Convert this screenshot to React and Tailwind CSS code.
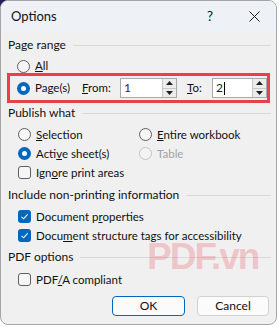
import React from "react";

const font = { fontFamily: 'Lato, "Noto Sans", sans-serif' };

function Radio({ checked, disabled }) {
  if (checked) {
    return (
      <span className="w-[13px] h-[13px] rounded-full bg-[#0067c0] flex items-center justify-center shrink-0">
        <span className="w-[5px] h-[5px] rounded-full bg-white" />
      </span>
    );
  }
  return (
    <span
      className={
        "w-[13px] h-[13px] rounded-full border shrink-0 " +
        (disabled ? "border-[#c4c4c4] bg-[#f3f3f3]" : "border-[#5f5f5f] bg-[#f6f6f6]")
      }
    />
  );
}

function Check({ checked }) {
  if (checked) {
    return (
      <span className="w-[13px] h-[13px] rounded-[3px] bg-[#0067c0] flex items-center justify-center shrink-0">
        <svg width="9" height="9" viewBox="0 0 9 9">
          <path d="M1.5 4.8 L3.6 6.8 L7.6 2.4" fill="none" stroke="white" strokeWidth="1.1" />
        </svg>
      </span>
    );
  }
  return <span className="w-[13px] h-[13px] rounded-[3px] border border-[#5f5f5f] bg-[#f6f6f6] shrink-0" />;
}

function Header({ children, className = "" }) {
  return (
    <div className={"h-[16px] flex items-center " + className}>
      <span className="text-[12px] text-[#111] leading-none whitespace-nowrap">{children}</span>
      <span className="flex-1 h-px bg-[#d9d9d9] ml-[7px] mr-[-2px]" />
    </div>
  );
}

function Spin() {
  return (
    <div className="w-[14px] h-full flex flex-col border-l border-[#c8c8c8]">
      <div className="flex-1 bg-[#ececec] flex items-center justify-center border-b border-[#c8c8c8]">
        <svg width="7" height="4" viewBox="0 0 7 4"><path d="M0 4 L3.5 0 L7 4 Z" fill="#202020" /></svg>
      </div>
      <div className="flex-1 bg-[#ececec] flex items-center justify-center">
        <svg width="7" height="4" viewBox="0 0 7 4"><path d="M0 0 L3.5 4 L7 0 Z" fill="#202020" /></svg>
      </div>
    </div>
  );
}

function Row({ children, className = "" }) {
  return <div className={"h-[19px] flex items-center " + className}>{children}</div>;
}

function Label({ children, className = "" }) {
  return <span className={"text-[11.5px] leading-none whitespace-nowrap text-[#111] " + className}>{children}</span>;
}

export default function App() {
  return (
    <div
      className="w-[280px] h-[327px] bg-[linear-gradient(135deg,#221f5e_5px,#ffffff_5px)] relative overflow-hidden"
      style={font}
    >
      <div className="w-[277px] h-[325px] rounded-[8px] border border-[#a6a6a6] overflow-hidden flex flex-col bg-[#f0f0f0]">
        <div className="h-[31px] bg-[#eef2f7] flex items-center pl-[10px] shrink-0">
          <span className="text-[13px] text-[#111] leading-none">Options</span>
          <span className="ml-auto text-[13.5px] text-[#111] leading-none mr-[36px]">?</span>
          <svg width="11" height="11" viewBox="0 0 11 11" className="mr-[16px]">
            <path d="M0.5 0.5 L10.5 10.5 M10.5 0.5 L0.5 10.5" stroke="#1b1b1b" strokeWidth="1" />
          </svg>
        </div>

        <div className="flex-1 flex flex-col px-[7px] pt-[5px]">
          <Header>Page range</Header>
          <div className="h-[14px] mt-[6px] flex items-center pl-[9px] gap-[5px]">
            <Radio />
            <Label><u>A</u>ll</Label>
          </div>
          <div className="h-[30px] border-[3px] border-[#ec3f4a] flex items-center pl-[7px] mr-[-1px] ml-[-1px]">
            <Radio checked />
            <Label className="ml-[5px] w-[47px]">Pa<u>g</u>e(s)</Label>
            <Label className="w-[38px]"><u>F</u>rom:</Label>
            <div className="w-[57px] h-[20px] bg-white border border-[#a8a8a8] flex">
              <span className="flex-1 text-[12px] leading-[18px] pl-[3px] text-[#2a1e6e]">1</span>
              <Spin />
            </div>
            <Label className="ml-[10px] w-[25px]"><u>T</u>o:</Label>
            <div className="w-[55px] h-[20px] bg-white border border-[#a8a8a8] flex">
              <span className="flex-1 text-[12px] leading-[18px] pl-[3px] text-[#1b1b3b] flex items-center">
                2<span className="w-px h-[13px] bg-black ml-[1px]" />
              </span>
              <Spin />
            </div>
          </div>

          <Header className="mt-[2px]">Publish what</Header>
          <div className="grid grid-cols-[121px_1fr] mt-[4px] pl-[10px]">
            <Row className="gap-[5px]"><Radio /><Label><u>S</u>election</Label></Row>
            <Row className="gap-[5px]"><Radio /><Label><u>E</u>ntire workbook</Label></Row>
            <Row className="gap-[5px]"><Radio checked /><Label>Acti<u>v</u>e sheet(s)</Label></Row>
            <Row className="gap-[5px]"><Radio disabled /><Label className="text-[#a3a3a3]">Table</Label></Row>
            <Row className="gap-[5px] col-span-2"><Check /><Label>Ign<u>o</u>re print areas</Label></Row>
          </div>

          <Header className="mt-[5px]">Include non-printing information</Header>
          <div className="flex flex-col mt-[4px] pl-[10px]">
            <Row className="gap-[5px]"><Check checked /><Label>Document p<u>r</u>operties</Label></Row>
            <Row className="gap-[5px]"><Check checked /><Label>Docu<u>m</u>ent structure tags for accessibility</Label></Row>
          </div>

          <Header className="mt-[4px]">PDF options</Header>
          <div className="flex flex-col mt-[5px] pl-[10px]">
            <Row className="gap-[5px]"><Check /><Label>PDF<u>/</u>A compliant</Label></Row>
          </div>

          <div className="flex justify-end gap-[12px] mt-[7px]">
            <button className="w-[73px] h-[20px] rounded-[4px] bg-[#fbfbfb] border border-[#0067c0] text-[12px] leading-none text-[#111]">OK</button>
            <button className="w-[72px] h-[20px] rounded-[4px] bg-[#fbfbfb] border border-[#d0d0d0] text-[12px] leading-none text-[#111]">Cancel</button>
          </div>
        </div>
      </div>
      <div
        className="absolute left-[147px] top-[243px] text-[37px] font-bold leading-[28px] tracking-[-2px] pointer-events-none text-[rgba(232,70,85,0.26)]"
        style={{ fontFamily: '"Liberation Sans", Arial, sans-serif' }}
      >
        PDF.vn
      </div>
    </div>
  );
}
